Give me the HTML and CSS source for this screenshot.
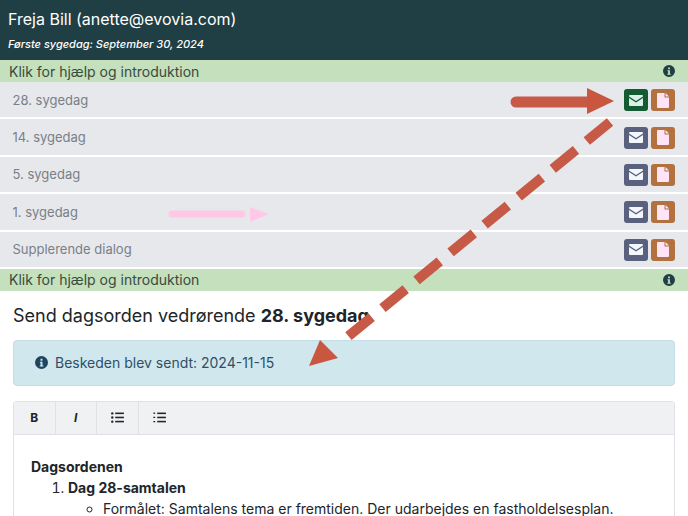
FILE: index.html
```html
<!DOCTYPE html>
<html lang="da">
<head>
<meta charset="utf-8">
<title>Sygedage</title>
<link rel="stylesheet" href="styles.css">
</head>
<body>
<svg width="0" height="0" class="defs">
  <symbol id="mail" viewBox="0 0 14 11"><path fill="currentColor" d="M1 0h12a1 1 0 0 1 1 1v.6L7 6 0 1.600V1a1 1 0 0 1 1-1zM0 3l7 4.400L14 3v7a1 1 0 0 1-1 1H1a1 1 0 0 1-1-1z"/></symbol>
  <symbol id="doc" viewBox="0 0 12 15"><path fill="currentColor" d="M1 0h6.500v4.500H12V14a1 1 0 0 1-1 1H1a1 1 0 0 1-1-1V1a1 1 0 0 1 1-1zM8.500 0 12 3.500H8.500z"/></symbol>
  <symbol id="info" viewBox="0 0 16 16"><path fill="currentColor" fill-rule="evenodd" d="M8 0a8 8 0 1 1 0 16A8 8 0 0 1 8 0zM6.800 3.400h2.400v2.400H6.800zM6 7h3.200v4.600H10.400v1.400H5.800v-1.400h1V8.400H6z"/></symbol>
</svg>
<div class="page">
  <header class="head">
    <div class="name">Freja Bill (anette@evovia.com)</div>
    <div class="since">Første sygedag: September 30, 2024</div>
  </header>
  <div class="help"><span>Klik for hjælp og introduktion</span><svg class="help-i"><use href="#info"/></svg></div>
  <div class="row"><span>28. sygedag</span><div class="btns"><button class="btn active"><svg class="i-mail"><use href="#mail"/></svg></button><button class="btn doc"><svg class="i-doc"><use href="#doc"/></svg></button></div></div>
  <div class="row"><span>14. sygedag</span><div class="btns"><button class="btn"><svg class="i-mail"><use href="#mail"/></svg></button><button class="btn doc"><svg class="i-doc"><use href="#doc"/></svg></button></div></div>
  <div class="row"><span>5. sygedag</span><div class="btns"><button class="btn"><svg class="i-mail"><use href="#mail"/></svg></button><button class="btn doc"><svg class="i-doc"><use href="#doc"/></svg></button></div></div>
  <div class="row"><span>1. sygedag</span><div class="btns"><button class="btn"><svg class="i-mail"><use href="#mail"/></svg></button><button class="btn doc"><svg class="i-doc"><use href="#doc"/></svg></button></div></div>
  <div class="row"><span>Supplerende dialog</span><div class="btns"><button class="btn"><svg class="i-mail"><use href="#mail"/></svg></button><button class="btn doc"><svg class="i-doc"><use href="#doc"/></svg></button></div></div>
  <div class="help"><span>Klik for hjælp og introduktion</span><svg class="help-i"><use href="#info"/></svg></div>
  <main class="content">
    <h1 class="title">Send dagsorden vedrørende <b>28. sygedag</b></h1>
    <div class="alert"><svg class="alert-i"><use href="#info"/></svg><span>Beskeden blev sendt: 2024-11-15</span></div>
    <div class="editor">
      <div class="toolbar">
        <div class="tool bold">B</div>
        <div class="tool ital">I</div>
        <div class="tool"><svg class="i-list" viewBox="0 0 14 12"><g fill="currentColor"><circle cx="1.300" cy="1.500" r="1.300"/><circle cx="1.300" cy="6" r="1.300"/><circle cx="1.300" cy="10.500" r="1.300"/><rect x="4.500" y="0.600" width="9.500" height="1.700"/><rect x="4.500" y="5.100" width="9.500" height="1.700"/><rect x="4.500" y="9.600" width="9.500" height="1.700"/></g></svg></div>
        <div class="tool"><svg class="i-list" viewBox="0 0 14 12"><g fill="currentColor"><rect x="0.300" y="0.600" width="2" height="1.400"/><rect x="0.300" y="5.200" width="2" height="1.400"/><rect x="0.300" y="9.800" width="2" height="1.400"/><rect x="4.500" y="0.600" width="9.500" height="1.700"/><rect x="4.500" y="5.100" width="9.500" height="1.700"/><rect x="4.500" y="9.600" width="9.500" height="1.700"/></g></svg></div>
      </div>
      <div class="body">
        <p class="doc-title">Dagsordenen</p>
        <ol class="agenda">
          <li><b>Dag 28-samtalen</b>
            <ul><li>Formålet: Samtalens tema er fremtiden. Der udarbejdes en fastholdelsesplan.</li></ul>
          </li>
        </ol>
      </div>
    </div>
  </main>
  <svg class="arrows" viewBox="0 0 688 516" aria-hidden="true">
    <g class="halo">
      <rect x="170" y="210" width="72" height="12"/>
      <rect x="586" y="82" width="34" height="28"/>
      <rect x="652" y="80" width="24" height="190"/>
    </g>
    <line class="shaft" x1="516" y1="102" x2="590" y2="102"/>
    <polygon class="head-arrow" points="587,88 614,101 587,114"/>
    <line class="dash" x1="610" y1="122" x2="340" y2="343"/>
    <polygon class="head-arrow" points="320,340 338,358 309,366"/>
    <line class="ghost" x1="172" y1="214" x2="242" y2="214"/>
    <polygon class="ghost-head" points="250,207 269,214 250,222"/>
  </svg>
</div>
</body>
</html>
```
FILE: styles.css
```css
* { box-sizing: border-box; }
html, body { margin: 0; padding: 0; }
body { font-family: Inter, "Liberation Sans", sans-serif; background: #fff; color: #212529; }
.defs { position: absolute; }
.page { position: relative; width: 688px; height: 516px; overflow: hidden; }

.head { height: 60px; background: #1f3f44; color: #fff; padding: 9px 8px 0; }
.name { font-size: 16px; line-height: 20px; }
.since { font-size: 11px; line-height: 14px; font-style: italic; font-weight: 500; margin-top: 8px; }

.help { height: 22px; background: #c4e0bc; color: #3a4a3e; display: flex; align-items: center; justify-content: space-between; padding: 0 13px 0 9px; font-size: 14px; }
.help-i { width: 12px; height: 12px; color: #1f3f44; }

.row { height: 37.4px; background: #e6e8ec; border-bottom: 2px solid #fff; display: flex; align-items: center; justify-content: space-between; padding: 0 13px 0 12.500px; font-size: 13px; color: #7a7f87; }
.row:nth-of-type(n) { flex: none; }
.btns { display: flex; gap: 3px; margin-top: 1px; }
.btn { width: 24px; height: 22px; padding: 0; border: 0; border-radius: 3px; background: #59617f; color: #f3f6fb; display: flex; align-items: center; justify-content: center; }
.btn.active { background: #145a32; color: #d8f0e8; }
.btn.doc { background: #b3713f; color: #ffe3f6; }
.i-mail { width: 14px; height: 11px; }
.i-doc { width: 12px; height: 15px; }

.content { padding: 0 13px 0 13px; }
.title { margin: 0; font-size: 18px; line-height: 22px; font-weight: 400; padding-top: 14px; color: #212529; }
.title b { font-weight: 700; }
.alert { height: 46px; margin-top: 13px; background: #d1e7ee; border: 1px solid #c5dde6; border-radius: 4px; color: #2e4f66; display: flex; align-items: center; gap: 7px; padding-left: 21px; font-size: 14px; }
.alert-i { width: 13px; height: 13px; color: #1d4560; }

.editor { margin-top: 15px; border: 1px solid #dee2e6; border-radius: 3px 3px 0 0; height: 200px; }
.toolbar { height: 33px; background: #eff1f3; border-bottom: 1px solid #dee2e6; display: flex; }
.tool { width: 41.500px; border-right: 1px solid #dfe2e5; display: flex; align-items: center; justify-content: center; font-size: 12px; color: #212529; }
.tool:last-child { border-right: 0; }
.bold { font-weight: 700; }
.ital { font-style: italic; font-weight: 700; }
.i-list { width: 13px; height: 11px; color: #212529; }

.body { padding: 21px 17px 0; font-size: 14px; line-height: 21px; }
.doc-title { margin: 0; font-weight: 700; }
.agenda { margin: 0; padding-left: 37px; }
.agenda ul { margin: 0; padding-left: 35px; list-style: circle; }
.agenda b { font-weight: 700; }

.arrows { position: absolute; left: 0; top: 0; width: 688px; height: 516px; pointer-events: none; }
.halo rect { fill: #ffd6ee; opacity: 0; }
.shaft { stroke: #c65a46; stroke-width: 11px; stroke-linecap: round; }
.head-arrow { fill: #c9563f; }
.dash { stroke: #c65a46; stroke-width: 10px; stroke-dasharray: 30 14; }
.ghost { stroke: #ffc8e6; stroke-width: 7px; stroke-linecap: round; }
.ghost-head { fill: #ffc8e6; }
```
